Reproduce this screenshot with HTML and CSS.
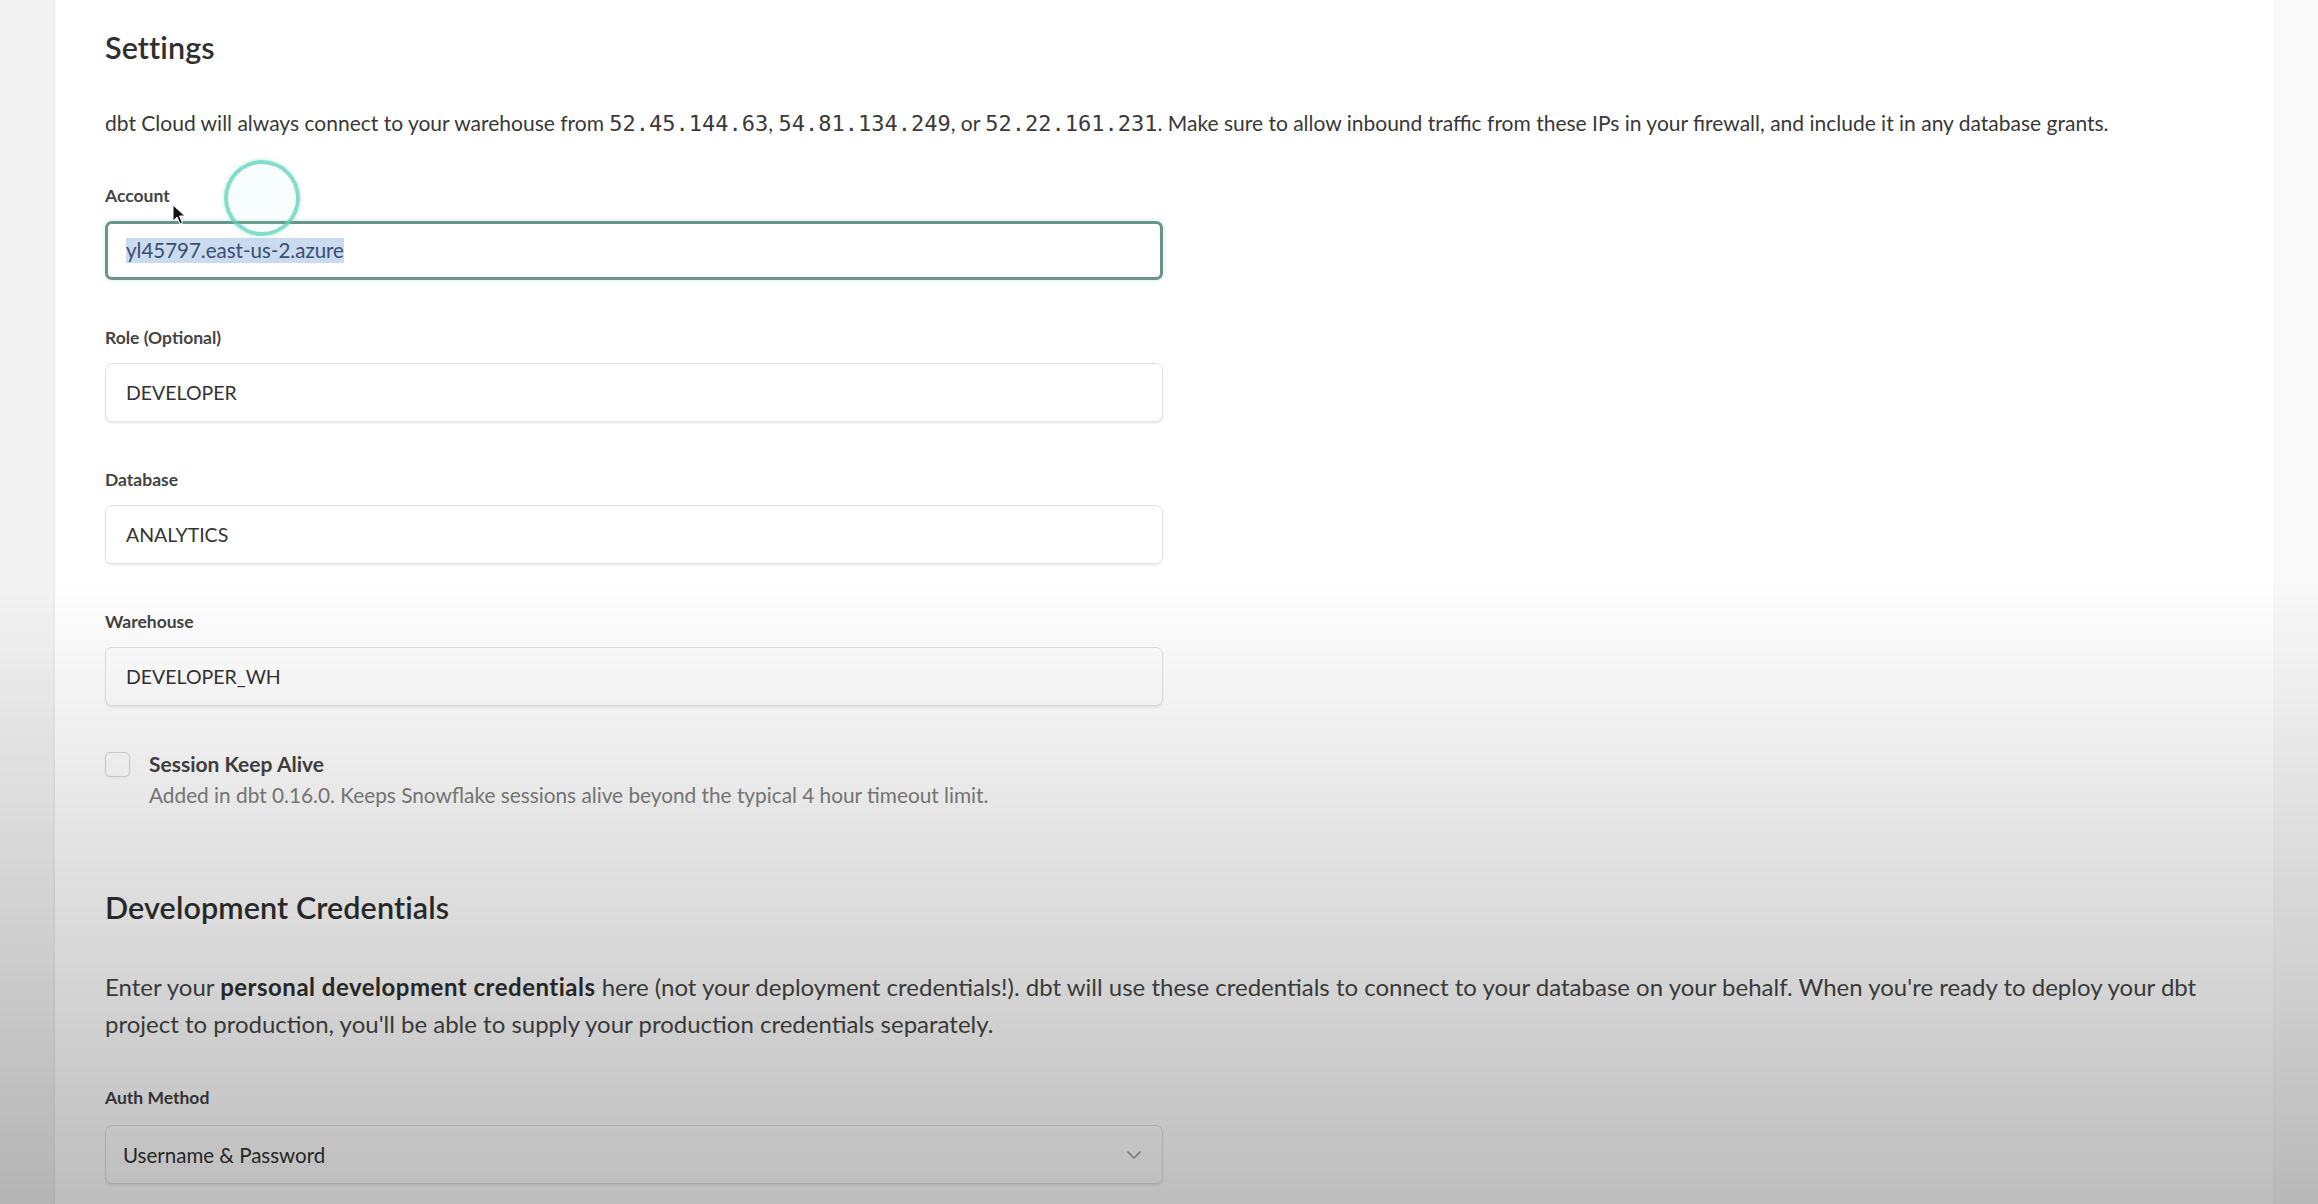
FILE: index.html
```html
<!DOCTYPE html>
<html lang="en">
<head>
<meta charset="utf-8">
<title>Settings</title>
<link rel="stylesheet" href="styles.css">
</head>
<body>
<div class="page">
  <aside class="gutter gutter-left"></aside>
  <main class="card">
    <section class="section">
      <h2 class="heading">Settings</h2>
      <p class="desc">dbt Cloud will always connect to your warehouse from <code class="ip">52.45.144.63</code>, <code class="ip">54.81.134.249</code>, or <code class="ip">52.22.161.231</code>. Make sure to allow inbound traffic from these IPs in your firewall, and include it in any database grants.</p>

      <div class="field field-first">
        <div class="label">Account</div>
        <div class="input input-focus"><span class="selected">yl45797.east-us-2.azure</span></div>
      </div>
      <div class="field">
        <div class="label">Role (Optional)</div>
        <div class="input">DEVELOPER</div>
      </div>
      <div class="field">
        <div class="label">Database</div>
        <div class="input">ANALYTICS</div>
      </div>
      <div class="field">
        <div class="label">Warehouse</div>
        <div class="input">DEVELOPER_WH</div>
      </div>

      <div class="check-row">
        <span class="checkbox"></span>
        <div class="check-text">
          <div class="check-title">Session Keep Alive</div>
          <div class="check-desc">Added in dbt 0.16.0. Keeps Snowflake sessions alive beyond the typical 4 hour timeout limit.</div>
        </div>
      </div>
    </section>

    <section class="section section-dev">
      <h2 class="heading">Development Credentials</h2>
      <p class="para">Enter your <strong>personal development credentials</strong> here (not your deployment credentials!). dbt will use these credentials to connect to your database on your behalf. When you're ready to deploy your dbt project to production, you'll be able to supply your production credentials separately.</p>
      <div class="field field-auth">
        <div class="label">Auth Method</div>
        <div class="input select">
          <span>Username &amp; Password</span>
          <svg class="chevron" width="16" height="10" viewBox="0 0 16 10"><path d="M2 2 L8 8 L14 2" fill="none" stroke="#9a9a9a" stroke-width="1.6" stroke-linecap="round" stroke-linejoin="round"/></svg>
        </div>
      </div>
    </section>
  </main>
  <aside class="gutter gutter-right"></aside>
</div>

<div class="click-ring"></div>
<svg class="cursor" width="16" height="22" viewBox="0 0 16 22"><path d="M1 1 L1 17 L5 13 L8 20 L10.5 19 L7.5 12 L13 12 Z" fill="#111" stroke="#fff" stroke-width="1"/></svg>
<div class="shade"></div>
</body>
</html>
```

FILE: styles.css
```css
html, body {
  margin: 0;
  padding: 0;
  height: 100%;
  overflow: hidden;
}

body {
  background: #f5f5f5;
  font-family: "Lato", "Open Sans", sans-serif;
  color: #3a3a3a;
}

.page {
  display: flex;
  height: 1204px;
  width: 2318px;
}

.gutter {
  flex: none;
}

.gutter-left {
  width: 55px;
  background: #f3f3f3;
}

.gutter-right {
  width: 45px;
  background: #f9f9f9;
}

.card {
  flex: 1;
  background: #ffffff;
  box-shadow: 0 0 3px rgba(0, 0, 0, 0.08);
  padding: 29px 50px 0 50px;
  overflow: hidden;
}

.section {
  display: flex;
  flex-direction: column;
}

.heading {
  margin: 0;
  font-size: 30.5px;
  line-height: 36px;
  font-weight: 600;
  color: #2f2f2f;
  letter-spacing: 0.1px;
}

.desc {
  margin: 43px 0 0 0;
  font-size: 21px;
  line-height: 30px;
  color: #383838;
  white-space: nowrap;
}

.ip {
  font-family: "DejaVu Sans Mono", "Liberation Mono", monospace;
  font-size: 22px;
  color: #3a3a3a;
}

.field {
  display: flex;
  flex-direction: column;
  gap: 15px;
  margin-top: 48px;
  width: 1058px;
}

.field-first {
  margin-top: 47px;
}

.label {
  font-size: 17.5px;
  line-height: 20px;
  font-weight: 700;
  color: #444;
}

.input {
  box-sizing: border-box;
  height: 59px;
  display: flex;
  align-items: center;
  padding: 0 20px;
  border: 1px solid #e2e2e2;
  border-radius: 7px;
  box-shadow: 0 2px 2px rgba(0, 0, 0, 0.06);
  background: #fff;
  font-size: 19.5px;
  color: #333;
}

.input-focus {
  border: 3px solid #6a9389;
  padding-left: 18px;
  box-shadow: 0 0 0 2px rgba(120, 220, 200, 0.15);
}

.selected {
  background: #c8dbef;
  color: #3d4d70;
  line-height: 25px;
  font-size: 20.5px;
}

.check-row {
  display: flex;
  gap: 19px;
  margin-top: 46px;
  align-items: flex-start;
}

.checkbox {
  flex: none;
  box-sizing: border-box;
  width: 25px;
  height: 25px;
  border: 1px solid #dadada;
  border-radius: 5px;
  background: #fff;
  box-shadow: 0 1px 2px rgba(0, 0, 0, 0.05);
}

.check-title {
  font-size: 21px;
  line-height: 24px;
  font-weight: 700;
  color: #444;
}

.check-desc {
  margin-top: 6px;
  font-size: 20.8px;
  line-height: 26px;
  color: #808080;
}

.section-dev {
  margin-top: 81px;
}

.para {
  margin: 43px 0 0 0;
  font-size: 24px;
  line-height: 37px;
  color: #474747;
}

.para strong {
  font-weight: 700;
  color: #2f2f2f;
  letter-spacing: 0.5px;
}

.field-auth {
  margin-top: 46px;
  gap: 17px;
}

.select {
  justify-content: space-between;
  padding: 0 20px 0 17px;
  font-size: 20.5px;
}

.chevron {
  flex: none;
}

.click-ring {
  position: fixed;
  left: 224px;
  top: 160px;
  width: 76px;
  height: 76px;
  box-sizing: border-box;
  border-radius: 50%;
  border: 4px solid rgba(95, 210, 185, 0.75);
  background: rgba(170, 240, 225, 0.08);
  box-shadow: 0 0 4px rgba(95, 210, 185, 0.45);
  pointer-events: none;
}

.cursor {
  position: fixed;
  left: 172px;
  top: 204px;
  pointer-events: none;
}

.shade {
  position: fixed;
  inset: 0;
  pointer-events: none;
  background: linear-gradient(to bottom, rgba(0, 0, 0, 0) 0, rgba(0, 0, 0, 0) 580px, rgba(0, 0, 0, 0.26) 1204px);
}
```
